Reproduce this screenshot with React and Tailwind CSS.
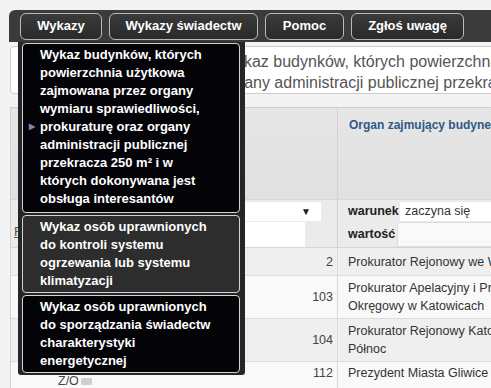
const menu = [
  { label: "Wykazy", w: "w-[82px]" },
  { label: "Wykazy świadectw", w: "w-[149px]" },
  { label: "Pomoc", w: "w-[79px]" },
  { label: "Zgłoś uwagę", w: "w-[113px]" },
];

const rows = [
  { n: "2", text: ["Prokurator Rejonowy we Wrocławiu"], h: "h-[28px]", bg: "bg-[#efefef]" },
  { n: "103", text: ["Prokurator Apelacyjny i Prokurator", "Okręgowy w Katowicach"], h: "h-[43px]", bg: "bg-[#f9f9f9]" },
  { n: "104", text: ["Prokurator Rejonowy Katowice -", "Północ"], h: "h-[43px]", bg: "bg-[#efefef]" },
  { n: "112", text: ["Prezydent Miasta Gliwice"], h: "h-[30px]", bg: "bg-[#f9f9f9]", extra: true },
];

const items = [
  {
    bg: "bg-[#040408]",
    h: "h-[170px]",
    lines: [
      "Wykaz budynków, których",
      "powierzchnia użytkowa",
      "zajmowana przez organy",
      "wymiaru sprawiedliwości,",
      "prokuraturę oraz organy",
      "administracji publicznej",
      "przekracza 250 m² i w",
      "których dokonywana jest",
      "obsługa interesantów",
    ],
    arrow: 4,
  },
  {
    bg: "bg-[#2d2d2d]",
    h: "h-[78px]",
    lines: ["Wykaz osób uprawnionych", "do kontroli systemu", "ogrzewania lub systemu", "klimatyzacji"],
  },
  {
    bg: "bg-[#040408]",
    h: "h-[78px]",
    lines: ["Wykaz osób uprawnionych", "do sporządzania świadectw", "charakterystyki", "energetycznej"],
  },
];

function Dropdown() {
  return (
    <div className="absolute left-[18px] top-[42px] w-[227px] h-[333px] bg-[#262626] pl-[4px] pr-[5px] pt-[1px] flex flex-col gap-[2px] rounded-b-[3px] text-[13px] leading-[18px] font-bold text-white">
      {items.map((it, i) => (
        <div key={i} className={`${it.bg} ${it.h} border border-[#d4d4d4] rounded-[4px] pt-[2px] whitespace-nowrap`}>
          {it.lines.map((l, j) => (
            <div key={l} className="flex items-center">
              <span className="w-[17px] pl-[6px] text-[8px] text-[#7d8bab]">{it.arrow === j ? "▶" : ""}</span>
              {l}
            </div>
          ))}
        </div>
      ))}
    </div>
  );
}

export default function App() {
  return (
    <div className="relative w-[491px] h-[388px] overflow-hidden bg-[#f3f3f3] pt-[10px] pl-[9px] font-['Liberation_Sans',Arial,sans-serif]">
      {/* top menu */}
      <div className="w-[600px] h-[32px] bg-[#3b3b3b] rounded-tl-[6px] flex items-center gap-[7px] pl-[11px]">
        {menu.map((m) => (
          <div
            key={m.label}
            className={`${m.w} h-[27px] flex items-center justify-center rounded-[6px] border border-[#b9b9b9] bg-gradient-to-b from-[#3a3a3a] to-[#2a2a2a] text-white text-[13px] font-bold`}
          >
            {m.label}
          </div>
        ))}
      </div>

      {/* title box */}
      <div className="ml-[1px] mt-[4px] w-[700px] h-[48px] bg-white border border-[#cccccc] rounded-[4px] pl-[210px] pt-[4px] text-[16px] leading-[21px] text-[#555] whitespace-nowrap">
        <div>Wykaz budynków, których powierzchnia użytkowa zajmowana przez organy</div>
        <div>organy administracji publicznej przekracza 250 m²</div>
      </div>

      {/* table */}
      <div className="ml-[1px] mt-[13px] w-[700px] border-t border-l border-[#d0d0d0] text-[12.5px] text-[#333]">
        <div className="flex h-[92px] bg-gradient-to-b from-[#e6e6e6] to-[#e0e0e0] border-b border-[#d6d6d6]">
          <div className="w-[327px] border-r border-[#d2d2d2]" />
          <div className="pl-[11px] pt-[8px] text-[12px] font-bold text-[#2f5a86] whitespace-nowrap">
            Organ zajmujący budynek
          </div>
        </div>

        {/* filters */}
        <div className="flex h-[48px] bg-[#ebebeb] border-b border-[#d6d6d6]">
          <div className="w-[327px] border-r border-[#d2d2d2] flex flex-col pt-[2px] gap-[1px]">
            <div className="ml-[150px] mr-[16px] h-[19px] bg-white flex items-center justify-end pr-[10px] text-[10px] text-[#222]">
              ▼
            </div>
            <div className="flex h-[25px]">
              <span className="pl-[3px] text-[13px] text-[#555] underline">R</span>
              <div className="ml-auto mr-[32px] w-[145px] bg-white" />
            </div>
          </div>
          <div className="flex-1 flex flex-col pt-[2px] gap-[1px] font-bold text-[#222]">
            <div className="flex h-[19px]">
              <span className="w-[62px] pl-[10px] flex items-center">warunek</span>
              <div className="flex-1 bg-white pl-[5px] flex items-center font-normal text-[#333]">zaczyna się</div>
            </div>
            <div className="flex h-[25px]">
              <span className="w-[59px] pl-[10px] flex items-center">wartość</span>
              <div className="flex-1 bg-[#f9f9f9] border border-[#dddddd]" />
            </div>
          </div>
        </div>

        {rows.map((r) => (
          <div key={r.n} className={`flex ${r.h} ${r.bg} border-b border-[#dcdcdc] leading-[18px]`}>
            <div
              className={`w-[327px] border-r border-[#dadada] flex ${r.extra ? "items-start pt-[2px]" : "items-center"} pr-[4px] text-[#444]`}
            >
              {r.extra && (
                <span className="ml-[47px] mt-[8px] flex items-center gap-[2px]">
                  Z/O
                  <span className="w-[11px] h-[7px] bg-[#cfcfcf] rounded-[1px]" />
                </span>
              )}
              <span className="ml-auto">{r.n}</span>
            </div>
            <div className={`pl-[10px] flex flex-col ${r.extra ? "pt-[2px]" : "justify-center"} whitespace-nowrap`}>
              {r.text.map((t) => (
                <div key={t}>{t}</div>
              ))}
            </div>
          </div>
        ))}
      </div>

      <Dropdown />
    </div>
  );
}
